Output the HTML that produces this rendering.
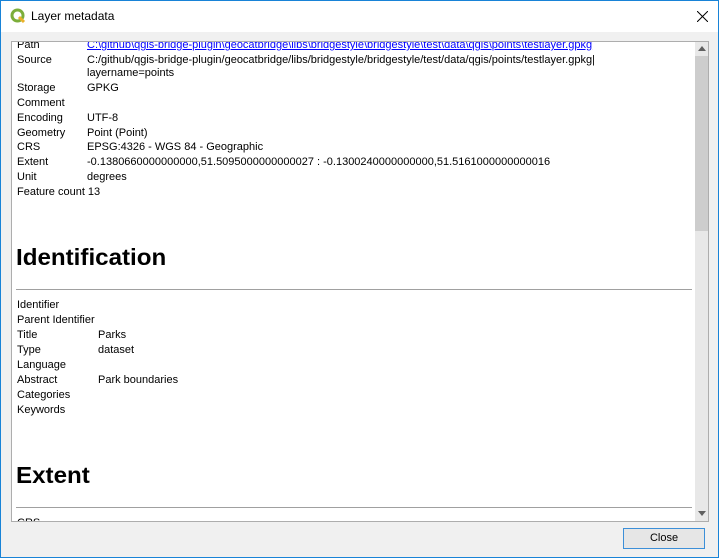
<!DOCTYPE html><html><head><style>
*{margin:0;padding:0;box-sizing:border-box}
body{width:719px;height:558px;background:#f0f0f0;font-family:"Liberation Sans",sans-serif;font-size:11px;color:#000;position:relative;overflow:hidden}
.win{position:absolute;left:0;top:0;width:719px;height:558px;border:1px solid #1883d7}
.title{position:absolute;left:0;top:0;width:717px;height:31px;background:#fff}
.title span{position:absolute;left:30px;top:8px;font-size:12px}
.box{position:absolute;left:10px;top:40px;width:698px;height:481px;background:#fff;border:1px solid #adadad;overflow:hidden}
.t{position:absolute;white-space:nowrap;line-height:13px}
.sb{position:absolute;left:683px;top:0;width:14px;height:479px;background:#e8e8e8}
.h{position:absolute;font-weight:bold;font-size:23px;left:4px;transform:scaleX(1.05);transform-origin:left}
.hr{position:absolute;left:4px;width:676px;height:1px;background:#a0a0a0}
a{color:#0000ff;text-decoration:underline}
</style></head><body><div class="win">
<div class="title"><svg style="position:absolute;left:9px;top:7px" width="16" height="16" viewBox="0 0 16 16"><circle cx="7.5" cy="7.5" r="5.5" fill="none" stroke="#7cae3a" stroke-width="3"/><path d="M9 9l5 5" stroke="#e9b12b" stroke-width="3"/></svg><span>Layer metadata</span>
<svg style="position:absolute;left:696px;top:10px" width="11" height="11"><path d="M0 0L11 11M11 0L0 11" stroke="#000" stroke-width="1"/></svg></div>
<div class="box">
<div class="t" style="left:5px;top:-3px">Path</div><div class="t" style="left:75px;top:-3px"><a>C:\github\qgis-bridge-plugin\geocatbridge\libs\bridgestyle\bridgestyle\test\data\qgis\points\testlayer.gpkg</a></div>
<div class="t" style="left:5px;top:12px">Source</div><div class="t" style="left:75px;top:12px">C:/github/qgis-bridge-plugin/geocatbridge/libs/bridgestyle/bridgestyle/test/data/qgis/points/testlayer.gpkg|</div>
<div class="t" style="left:75px;top:25px">layername=points</div>
<div class="t" style="left:5px;top:40px">Storage</div><div class="t" style="left:75px;top:40px">GPKG</div>
<div class="t" style="left:5px;top:55px">Comment</div>
<div class="t" style="left:5px;top:70px">Encoding</div><div class="t" style="left:75px;top:70px">UTF-8</div>
<div class="t" style="left:5px;top:85px">Geometry</div><div class="t" style="left:75px;top:85px">Point (Point)</div>
<div class="t" style="left:5px;top:99px">CRS</div><div class="t" style="left:75px;top:99px">EPSG:4326 - WGS 84 - Geographic</div>
<div class="t" style="left:5px;top:114px">Extent</div><div class="t" style="left:75px;top:114px">-0.1380660000000000,51.5095000000000027 : -0.1300240000000000,51.5161000000000016</div>
<div class="t" style="left:5px;top:129px">Unit</div><div class="t" style="left:75px;top:129px">degrees</div>
<div class="t" style="left:5px;top:144px">Feature count 13</div>
<div class="h" style="top:202px">Identification</div>
<div class="hr" style="top:247px"></div>
<div class="t" style="left:5px;top:257px">Identifier</div>
<div class="t" style="left:5px;top:272px">Parent Identifier</div>
<div class="t" style="left:5px;top:287px">Title</div><div class="t" style="left:86px;top:287px">Parks</div>
<div class="t" style="left:5px;top:302px">Type</div><div class="t" style="left:86px;top:302px">dataset</div>
<div class="t" style="left:5px;top:317px">Language</div>
<div class="t" style="left:5px;top:332px">Abstract</div><div class="t" style="left:86px;top:332px">Park boundaries</div>
<div class="t" style="left:5px;top:347px">Categories</div>
<div class="t" style="left:5px;top:362px">Keywords</div>
<div class="h" style="top:420px">Extent</div>
<div class="hr" style="top:465px"></div>
<div class="t" style="left:5px;top:475px">CRS</div>
<div class="sb"><div style="position:absolute;left:0;top:14px;width:14px;height:175px;background:#cdcdcd"></div>
<svg style="position:absolute;left:3px;top:4px" width="8" height="5"><path d="M0 5L4 0L8 5Z" fill="#606060"/></svg>
<svg style="position:absolute;left:3px;top:469px" width="8" height="5"><path d="M0 0L4 5L8 0Z" fill="#606060"/></svg></div>
</div>
<div style="position:absolute;left:622px;top:527px;width:82px;height:21px;border:1px solid #3c8fd8;background:#e6e6e6;text-align:center;line-height:19px">Close</div>
</div></body></html>
